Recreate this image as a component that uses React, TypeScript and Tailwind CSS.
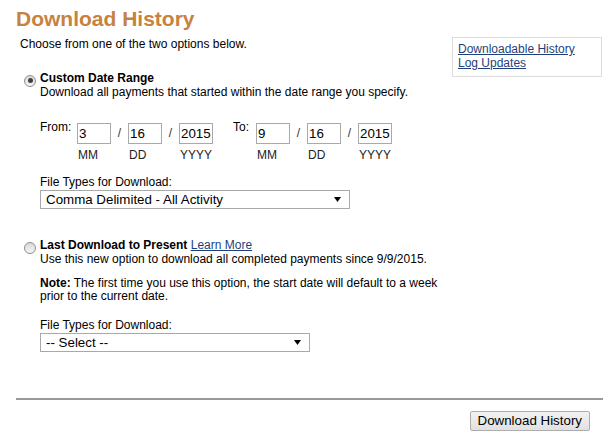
const Radio = ({ checked }: { checked?: boolean }) => (
  <span className="mt-[3px] flex h-[12px] w-[12px] shrink-0 items-center justify-center rounded-full border border-[#8e8f8f] bg-gradient-to-b from-[#d9d9d9] to-[#f6f6f6]">
    {checked && <span className="h-[5px] w-[5px] rounded-full bg-[#404040]" />}
  </span>
);

const DateField = ({ value, label }: { value: string; label: string }) => (
  <div className="flex w-[34px] flex-col">
    <div className="h-[21px] w-[34px] border border-[#a9a9a9] bg-white px-[1px] text-[13.33px] leading-[19px]">
      {value}
    </div>
    <div className="mt-[5px] pl-[1px] text-[#222]">{label}</div>
  </div>
);

const Slash = () => (
  <div className="h-[21px] w-[17px] text-center leading-[21px] text-[#333]">/</div>
);

const FakeSelect = ({ text, width }: { text: string; width: string }) => (
  <div className={`${width} flex h-[19px] items-center justify-between border border-[#a9a9a9] bg-white pl-[5px] pr-[8px] text-[13.33px] leading-[17px]`}>
    <span>{text}</span>
    <svg width="7" height="5" viewBox="0 0 7 5">
      <path d="M0 0 H7 L3.5 5 Z" fill="#000" />
    </svg>
  </div>
);

export default function App() {
  return (
    <div className="h-[438px] w-[615px] overflow-hidden bg-white font-['Liberation_Sans',Arial,sans-serif] text-[12px] leading-[1.15] text-black">
      <div className="pl-4 pr-3 pt-[7px]">
        <h1 className="text-[21px] font-bold leading-[24px] text-[#c7823f]">Download History</h1>

        <div className="mt-[6px] flex items-start justify-between">
          <div className="pl-1">
            <p className="mt-px">Choose from one of the two options below.</p>

            {/* option 1 */}
            <div className="mt-5 flex gap-1 pl-1">
              <Radio checked />
              <div>
                <div className="font-bold">Custom Date Range</div>
                <div>Download all payments that started within the date range you specify.</div>

                <div className="mt-6 flex items-start">
                  <div className="-mt-[2px] w-[37px]">From:</div>
                  <DateField value="3" label="MM" />
                  <Slash />
                  <DateField value="16" label="DD" />
                  <Slash />
                  <DateField value="2015" label="YYYY" />
                  <div className="-mt-[2px] ml-[20px] w-[23px]">To:</div>
                  <DateField value="9" label="MM" />
                  <Slash />
                  <DateField value="16" label="DD" />
                  <Slash />
                  <DateField value="2015" label="YYYY" />
                </div>

                <div className="mt-[13px]">File Types for Download:</div>
                <FakeSelect text="Comma Delimited - All Activity" width="w-[310px]" />
              </div>
            </div>

            {/* option 2 */}
            <div className="mt-[30px] flex gap-1 pl-1">
              <Radio />
              <div>
                <div>
                  <span className="font-bold">Last Download to Present</span>{" "}
                  <a href="#" className="text-[#1f3f7c] underline">Learn More</a>
                </div>
                <div>Use this new option to download all completed payments since 9/9/2015.</div>
                <p className="mt-[10px] whitespace-nowrap">
                  <span className="font-bold">Note:</span> The first time you use this option, the start date will default to a week
                  <br />
                  prior to the current date.
                </p>
                <div className="mt-[15px]">File Types for Download:</div>
                <FakeSelect text="-- Select --" width="w-[270px]" />
              </div>
            </div>
          </div>

          <div className="mr-px w-[150px] border border-[#dcdcdc] p-[5px]">
            <a href="#" className="block text-[#1f3f7c] underline">Downloadable History</a>
            <a href="#" className="block text-[#1f3f7c] underline">Log Updates</a>
          </div>
        </div>

        <div className="mt-[46px] h-[2px] bg-[#999]" />

        <div className="mt-[11px] flex justify-end pr-[13px]">
          <button className="h-[20px] rounded-[2px] border border-[#adadad] bg-gradient-to-b from-[#f2f2f2] to-[#e1e1e1] px-[7px] text-[13.33px] leading-[18px] text-black">
            Download History
          </button>
        </div>
      </div>
    </div>
  );
}
